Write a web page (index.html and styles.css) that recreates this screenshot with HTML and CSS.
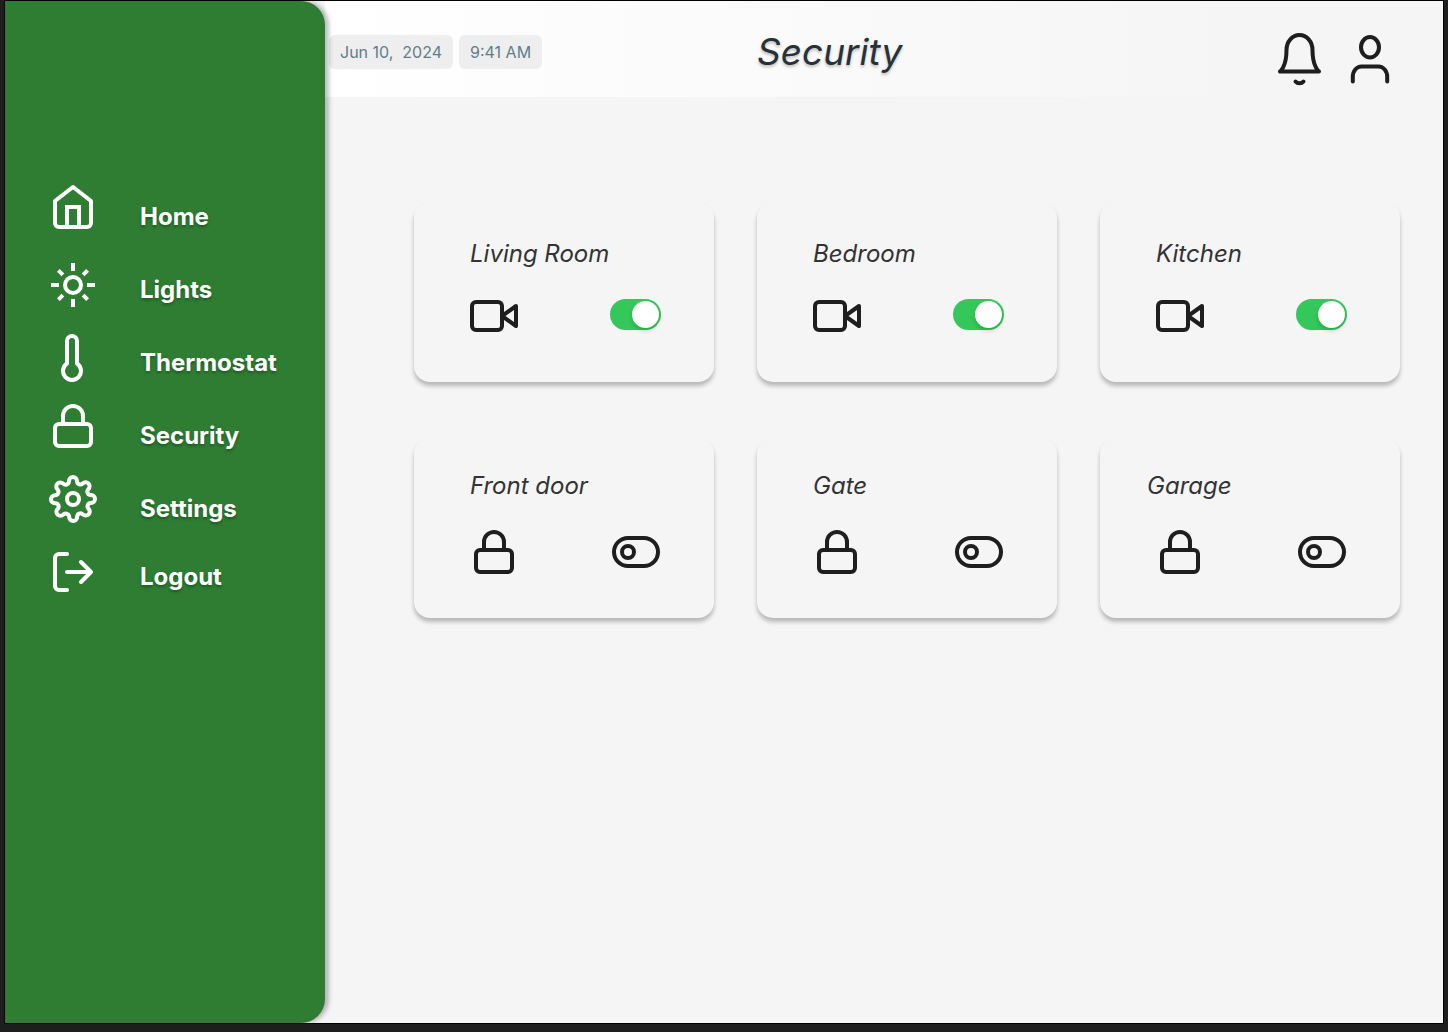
FILE: index.html
```html
<!DOCTYPE html>
<html lang="en">
<head>
  <meta charset="utf-8">
  <meta name="viewport" content="width=device-width, initial-scale=1">
  <title>Security</title>
  <link rel="stylesheet" href="styles.css">
</head>
<body>
  <svg class="sprite" aria-hidden="true">
    <symbol id="icon-lock" viewBox="0 0 48 48">
      <rect x="6" y="22" width="36" height="22" rx="4"/>
      <path d="M14 22v-8a10 10 0 0 1 20 0v8"/>
    </symbol>
    <symbol id="icon-video" viewBox="0 0 48 48">
      <path d="M46 14L32 24l14 10V14z"/>
      <rect x="2" y="10" width="30" height="28" rx="4"/>
    </symbol>
  </svg>

  <div class="app">
    <nav class="sidebar" aria-label="Main">
      <ul class="nav-list">
        <li><a class="nav-link" href="#home">
          <svg class="icon" viewBox="0 0 48 48" aria-hidden="true"><path d="M6 18L24 4l18 14v22a4 4 0 0 1-4 4H10a4 4 0 0 1-4-4V18z"/><path class="miter" d="M18 44V24h12v20"/></svg>
          <span class="nav-label">Home</span></a></li>
        <li><a class="nav-link nav-link--low" href="#lights">
          <svg class="icon" viewBox="0 0 48 48" aria-hidden="true"><circle cx="24" cy="24" r="8"/><path class="miter" d="M24 2v8M24 38v8M2 24h8M38 24h8M9.400 9.400l4.500 4.500M34.100 34.100l4.500 4.500M9.400 38.600l4.500-4.500M34.100 13.900l4.500-4.500"/></svg>
          <span class="nav-label nav-label--level">Lights</span></a></li>
        <li><a class="nav-link nav-link--low" href="#thermostat">
          <svg class="icon" viewBox="0 0 48 48" aria-hidden="true"><path d="M28 29.520V7a5 5 0 0 0-10 0v22.520a9 9 0 1 0 10 0z"/></svg>
          <span class="nav-label nav-label--level">Thermostat</span></a></li>
        <li><a class="nav-link" href="#security" aria-current="page">
          <svg class="icon" aria-hidden="true"><use href="#icon-lock"/></svg>
          <span class="nav-label">Security</span></a></li>
        <li><a class="nav-link" href="#settings">
          <svg class="icon" viewBox="0 0 24 24" aria-hidden="true"><g stroke-width="2"><circle cx="12" cy="12" r="3"/><path d="M19.4 15a1.65 1.65 0 0 0 .33 1.82l.06.06a2 2 0 0 1 0 2.83 2 2 0 0 1-2.83 0l-.06-.06a1.65 1.65 0 0 0-1.82-.33 1.65 1.65 0 0 0-1 1.51V21a2 2 0 0 1-2 2 2 2 0 0 1-2-2v-.09A1.65 1.65 0 0 0 9 19.4a1.65 1.65 0 0 0-1.82.33l-.06.06a2 2 0 0 1-2.83 0 2 2 0 0 1 0-2.83l.06-.06a1.65 1.65 0 0 0 .33-1.82 1.65 1.65 0 0 0-1.51-1H3a2 2 0 0 1-2-2 2 2 0 0 1 2-2h.09A1.65 1.65 0 0 0 4.6 9a1.65 1.65 0 0 0-.33-1.82l-.06-.06a2 2 0 0 1 0-2.83 2 2 0 0 1 2.83 0l.06.06a1.65 1.65 0 0 0 1.82.33H9a1.65 1.65 0 0 0 1-1.51V3a2 2 0 0 1 2-2 2 2 0 0 1 2 2v.09a1.65 1.65 0 0 0 1 1.51 1.65 1.65 0 0 0 1.82-.33l.06-.06a2 2 0 0 1 2.83 0 2 2 0 0 1 0 2.83l-.06.06a1.65 1.65 0 0 0-.33 1.82V9a1.65 1.65 0 0 0 1.51 1H21a2 2 0 0 1 2 2 2 2 0 0 1-2 2h-.09a1.65 1.65 0 0 0-1.51 1z"/></g></svg>
          <span class="nav-label">Settings</span></a></li>
        <li><a class="nav-link" href="#logout">
          <svg class="icon" viewBox="0 0 48 48" aria-hidden="true"><path d="M18 42h-8a4 4 0 0 1-4-4V10a4 4 0 0 1 4-4h8M32 34l10-10-10-10M42 24H18"/></svg>
          <span class="nav-label nav-label--level">Logout</span></a></li>
      </ul>
    </nav>

    <div class="page">
      <header class="topbar">
        <div class="stamps">
          <time class="stamp" datetime="2024-06-10">Jun 10,&nbsp; 2024</time>
          <time class="stamp" datetime="09:41">9:41 AM</time>
        </div>
        <h1 class="page-title">Security</h1>
        <div class="actions">
          <button class="icon-button" type="button" aria-label="Notifications">
            <svg class="icon icon--tall" viewBox="0 0 52 56" aria-hidden="true"><path d="M38.500 19A13 15 0 0 0 12.500 19C12.500 36 6 40.500 6 40.500H45S38.500 36 38.500 19M29.500 50.500a5 4.500 0 0 1-8 0"/></svg>
          </button>
          <button class="icon-button" type="button" aria-label="Account">
            <svg class="icon icon--tall" viewBox="0 0 52 56" aria-hidden="true"><ellipse cx="26" cy="16.300" rx="9" ry="10.200"/><path d="M8.800 50.500V46a8.600 10.300 0 0 1 8.600-10.500h17.200a8.600 10.300 0 0 1 8.600 10.500v4.500"/></svg>
          </button>
        </div>
      </header>

      <main class="cards">
        <section class="card">
          <h2 class="card-title"><label for="living-room">Living Room</label></h2>
          <div class="card-controls"><svg class="icon" aria-hidden="true"><use href="#icon-video"/></svg><input class="switch" type="checkbox" id="living-room" checked></div>
        </section>
        <section class="card">
          <h2 class="card-title"><label for="bedroom">Bedroom</label></h2>
          <div class="card-controls"><svg class="icon" aria-hidden="true"><use href="#icon-video"/></svg><input class="switch" type="checkbox" id="bedroom" checked></div>
        </section>
        <section class="card">
          <h2 class="card-title"><label for="kitchen">Kitchen</label></h2>
          <div class="card-controls"><svg class="icon" aria-hidden="true"><use href="#icon-video"/></svg><input class="switch" type="checkbox" id="kitchen" checked></div>
        </section>
        <section class="card card--lock">
          <h2 class="card-title"><label for="front-door">Front door</label></h2>
          <div class="card-controls"><svg class="icon" aria-hidden="true"><use href="#icon-lock"/></svg><input class="toggle" type="checkbox" id="front-door"></div>
        </section>
        <section class="card card--lock">
          <h2 class="card-title"><label for="gate">Gate</label></h2>
          <div class="card-controls"><svg class="icon" aria-hidden="true"><use href="#icon-lock"/></svg><input class="toggle" type="checkbox" id="gate"></div>
        </section>
        <section class="card card--lock">
          <h2 class="card-title card-title--outdent"><label for="garage">Garage</label></h2>
          <div class="card-controls"><svg class="icon" aria-hidden="true"><use href="#icon-lock"/></svg><input class="toggle" type="checkbox" id="garage"></div>
        </section>
      </main>
    </div>
  </div>
</body>
</html>
```
FILE: styles.css
```css
* {
  box-sizing: border-box;
}

body {
  display: flex;
  min-height: 100vh;
  margin: 0;
  padding: 0 4px 8px;
  background: #1e1e1e;
  color: #1e1e1e;
  font-family: Inter, "Liberation Sans", sans-serif;
}

.sprite {
  position: absolute;
  width: 0;
  height: 0;
}

.app {
  display: flex;
  flex: 1;
  overflow: hidden;
  border: 1px solid #000;
  background: #f5f5f5;
}

.icon {
  flex: none;
  width: 48px;
  height: 48px;
  fill: none;
  stroke: currentColor;
  stroke-width: 4;
  stroke-linecap: round;
  stroke-linejoin: round;
}

.icon--tall {
  display: block;
  width: 52px;
  height: 56px;
}

.miter {
  stroke-linecap: butt;
  stroke-linejoin: miter;
}

/* Sidebar */

.sidebar {
  z-index: 1;
  flex: none;
  width: 320px;
  padding: 182px 20px 40px 44px;
  border-radius: 0 24px 24px 0;
  background: #2e7d32;
  box-shadow: 4px 0 4px rgba(0, 0, 0, 0.25);
}

.nav-list {
  margin: 0;
  padding: 0;
  list-style: none;
}

.nav-link {
  display: flex;
  align-items: flex-start;
  gap: 43px;
  height: 73px;
  color: #fff;
  font-size: 24px;
  font-weight: 700;
  line-height: 30px;
  text-decoration: none;
}

.nav-link--low {
  padding-top: 5px;
}

.nav-label {
  margin-top: 19px;
  text-shadow: 0 2px 3px rgba(0, 0, 0, 0.3);
}

.nav-label--level {
  margin-top: 14px;
}

/* Header */

.page {
  flex: 1;
  min-width: 0;
}

.topbar {
  display: grid;
  grid-template-columns: 428px 1fr auto;
  align-items: center;
  height: 96px;
  padding: 6px 47px 0 4px;
  background: linear-gradient(90deg, #fff, #f5f5f5 85%);
}

.stamps {
  display: flex;
  gap: 6px;
}

.stamp {
  padding: 6px 11px;
  border-radius: 6px;
  background: #eee;
  color: #607d8b;
  font-size: 16px;
  line-height: 22px;
  white-space: nowrap;
}

.page-title {
  margin: 0;
  color: #263238;
  font-size: 37px;
  font-style: italic;
  font-weight: 400;
  line-height: 48px;
  text-shadow: 0 2px 3px rgba(0, 0, 0, 0.25);
}

.actions {
  display: flex;
  align-self: end;
  gap: 18px;
  padding-bottom: 10px;
}

.icon-button {
  padding: 0;
  border: 0;
  background: none;
  color: inherit;
  cursor: pointer;
}

/* Device cards */

.cards {
  display: grid;
  grid-template-columns: repeat(3, 1fr);
  gap: 56px 43px;
  padding: 105px 43px 40px 89px;
}

.card {
  display: flex;
  flex-direction: column;
  justify-content: space-between;
  min-height: 180px;
  padding: 37px 53px 42px 56px;
  border-radius: 16px;
  background: #f5f5f5;
  box-shadow: 0 4px 4px rgba(0, 0, 0, 0.25);
}

.card--lock {
  padding-top: 33px;
}

.card-title {
  margin: 0;
  color: #333;
  font-size: 24px;
  font-style: italic;
  font-weight: 400;
  line-height: 30px;
}

.card-title--outdent {
  margin-left: -9px;
}

.card-controls {
  display: flex;
  align-items: center;
  justify-content: space-between;
}

.switch,
.toggle {
  display: flex;
  align-items: center;
  margin: 0;
  appearance: none;
  cursor: pointer;
}

.switch {
  justify-content: flex-end;
  width: 51px;
  height: 31px;
  margin-bottom: 3px;
  padding: 2px;
  border-radius: 16px;
  background: #34c759;
}

.switch:not(:checked) {
  justify-content: flex-start;
  background: #c7c7cc;
}

.switch::before {
  content: "";
  width: 27px;
  height: 27px;
  border-radius: 50%;
  background: #fff;
  box-shadow: 0 3px 4px rgba(0, 0, 0, 0.15);
}

.toggle {
  width: 48px;
  height: 32px;
  margin-right: 1px;
  padding: 4px;
  border: 4px solid #1e1e1e;
  border-radius: 16px;
}

.toggle:checked {
  justify-content: flex-end;
}

.toggle::before {
  content: "";
  box-sizing: border-box;
  width: 16px;
  height: 16px;
  border: 4px solid #1e1e1e;
  border-radius: 50%;
}
```
